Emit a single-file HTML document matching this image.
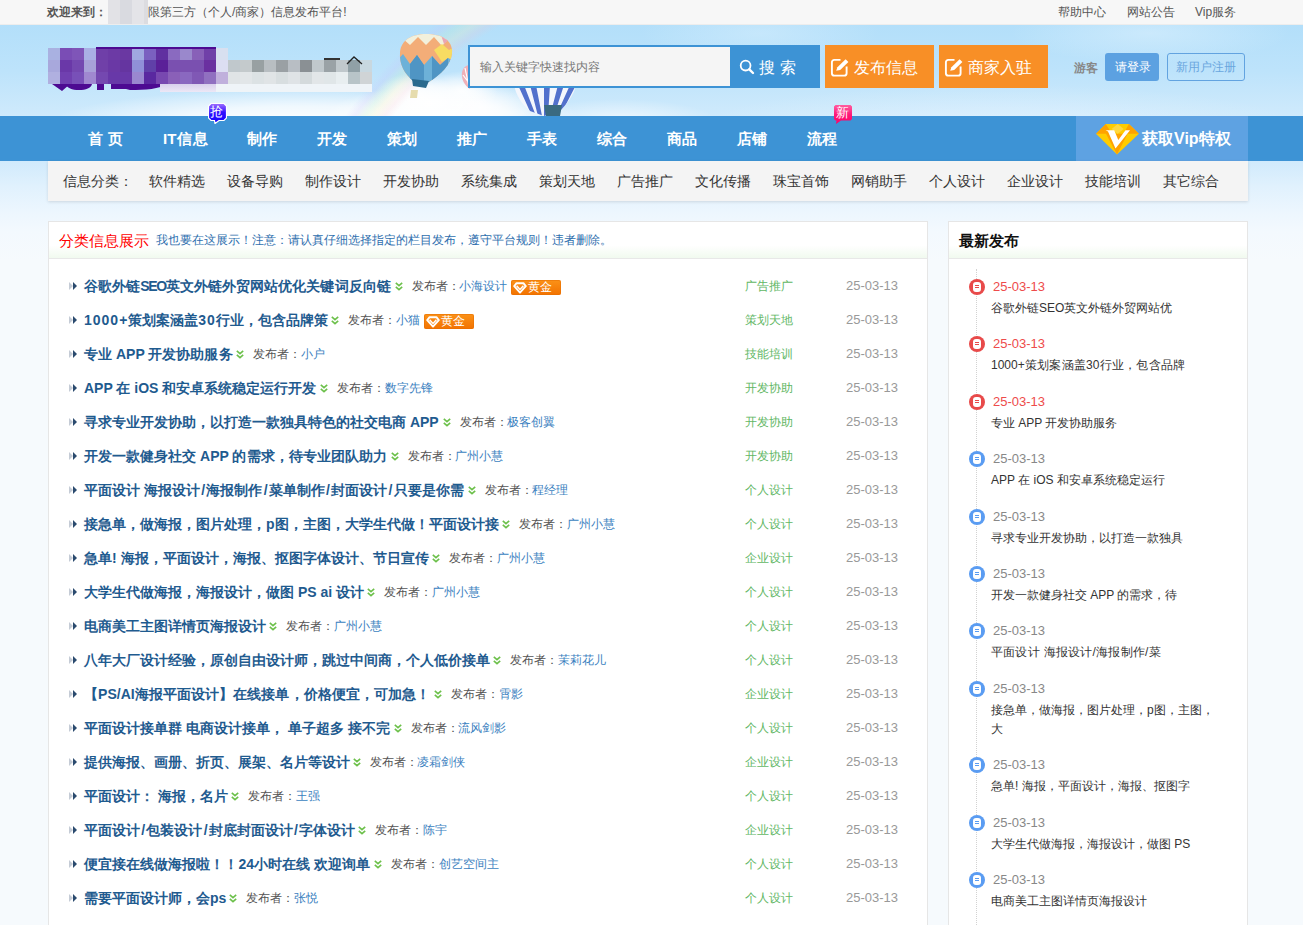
<!DOCTYPE html>
<html><head><meta charset="utf-8">
<style>
*{margin:0;padding:0;box-sizing:border-box}
html,body{width:1303px;height:925px;overflow:hidden}
body{font-family:"Liberation Sans",sans-serif;font-size:12px;color:#333;background:#f6fafd;position:relative}
.abs{position:absolute}
.j{text-align:justify;text-align-last:justify;white-space:nowrap}
#topbar{left:0;top:0;width:1303px;height:25px;background:#f7f7f7;border-bottom:1px solid #ededed}
#topbar span{position:absolute;top:5px;line-height:14px;font-size:12px;color:#555;white-space:nowrap}
#header{left:0;top:25px;width:1303px;height:91px;overflow:hidden;
 background:linear-gradient(180deg,#b3dffa 0%,#bde3fb 50%,#cfeafc 100%)}
#nav{left:0;top:116px;width:1303px;height:45px;background:#3d93d5}
#nav .it{position:absolute;top:0;height:45px;line-height:45px;color:#fff;font-size:15px;font-weight:bold;white-space:nowrap}
#vip{left:1076px;top:116px;width:172px;height:45px;background:#5ea2e2}
#vip b{position:absolute;left:66px;top:0;width:86px;line-height:45px;font-size:16px;color:#fff;text-align:justify;text-align-last:justify;white-space:nowrap}
.mb{position:absolute;width:12px;height:12px}
.btn-o{top:20px;width:109px;height:43px;background:#f88f26}
.btn-o span{position:absolute;left:29px;top:1px;line-height:43px;font-size:16px;color:#fff;white-space:nowrap}
#pagebg{left:0;top:161px;width:1303px;height:764px;background:linear-gradient(180deg,#d0eafc 0px,#e0f1fd 25px,#ecf6fe 50px,#f3f9fe 70px,#f6fafd 100px,#f6fafd 100%)}
#subbar{left:48px;top:161px;width:1200px;height:40px;background:#f4f4f4;box-shadow:0 1px 3px rgba(0,0,0,.12)}
#subbar span{position:absolute;top:0;line-height:40px;font-size:14px;color:#333;white-space:nowrap}
.panel{background:#fff;border:1px solid #e6e6e6}
.phead{position:absolute;left:0;top:0;right:0;height:37px;background:linear-gradient(180deg,#fff 0%,#fff 65%,#f1faef 100%);border-bottom:1px solid #e8e8e8}
.row{position:absolute;left:0;width:878px;height:34px;line-height:34px;white-space:nowrap}
.row .arr{position:absolute;left:20px;top:13px}
.tt{position:absolute;left:35px;top:0;text-align:justify;text-align-last:justify;font-size:14px;font-weight:bold;color:#1f5b8f}
.chev{position:absolute;top:13px}
.sl{font-style:normal;padding:0 1.25px}
.pb{position:absolute;top:0;width:43px;font-size:12px;color:#555;text-align:justify;text-align-last:justify}
.pn{position:absolute;top:0;font-size:12px;color:#3b7fc0;text-align:justify;text-align-last:justify}
.gold{position:absolute;top:11px;width:50px;height:15px;border-radius:2px;background:linear-gradient(180deg,#fb9218,#f27200);box-shadow:inset 0 0 0 1px rgba(230,110,0,.5)}
.gold b{position:absolute;left:17px;top:0;width:23px;text-align:justify;text-align-last:justify;white-space:nowrap;line-height:15px;font-weight:normal;color:#fff;font-size:12px}
.cat{position:absolute;left:696px;top:0;width:47.5px;font-size:12px;color:#62b765;text-align:justify;text-align-last:justify}
.dt{position:absolute;left:797px;top:0;font-size:13px;color:#999}
.si{position:absolute;left:0;width:298px}
.si .ic{position:absolute;left:20px;top:1.5px;width:16px;height:16px;border-radius:50%;background:#5a9cf2}
.si.red .ic{background:#e84a4a}
.si .ic i{position:absolute;left:4px;top:3px;width:8px;height:10px;border-radius:3px;background:#fff}
.si .ic i:before,.si .ic i:after{content:"";position:absolute;left:2px;width:4px;height:1px;background:#5a9cf2}
.si.red .ic i:before,.si.red .ic i:after{background:#e84a4a}
.si .ic i:before{top:3px;height:1.3px}.si .ic i:after{top:5.2px;height:1.3px}
.sd{position:absolute;left:44px;top:0;line-height:20px;font-size:13px;color:#888}
.si.red .sd{color:#ee4b4b}
.st{position:absolute;left:42px;top:22px;white-space:nowrap;text-align:justify;text-align-last:justify;line-height:19px;font-size:12px;color:#333}
#tl{position:absolute;left:27px;top:47px;width:0;height:680px;border-left:1px dotted #d2d2d2}
</style></head><body>
<div id="topbar" class="abs">
 <span class="j" style="left:47px;width:52px;font-weight:bold">欢迎来到：</span>
 <div class="abs" style="left:108px;top:0;width:40px;height:24px;background:linear-gradient(90deg,#e2e2e6 0 12px,#d9dae0 12px 24px,#e4e4e8 24px 36px,#dcdce0 36px)"></div>
 <span class="j" style="left:148px;width:197px">限第三方（个人/商家）信息发布平台!</span>
 <span class="j" style="left:1058px;width:47.5px">帮助中心</span>
 <span class="j" style="left:1127px;width:47.5px">网站公告</span>
 <span class="j" style="left:1195px;width:41.5px">Vip服务</span>
</div>
<div id="header" class="abs">
 <div class="abs" style="left:0;top:0;width:1303px;height:91px;background:
 radial-gradient(ellipse 60px 30px at 430px 78px,rgba(255,255,255,.95),rgba(255,255,255,.5) 55%,rgba(255,255,255,0)),
 radial-gradient(ellipse 40px 22px at 415px 70px,rgba(255,255,255,.95),rgba(255,255,255,.6) 55%,rgba(255,255,255,0)),
 radial-gradient(ellipse 36px 20px at 462px 66px,rgba(255,255,255,.9),rgba(255,255,255,.5) 55%,rgba(255,255,255,0)),
 radial-gradient(ellipse 50px 26px at 480px 82px,rgba(255,255,255,.9),rgba(255,255,255,.4) 55%,rgba(255,255,255,0)),
 radial-gradient(ellipse 130px 36px at 450px 95px,rgba(255,255,255,1),rgba(255,255,255,.7) 50%,rgba(255,255,255,0)),
 radial-gradient(ellipse 250px 34px at 300px 98px,rgba(255,255,255,.98),rgba(255,255,255,.7) 50%,rgba(255,255,255,0)),
 radial-gradient(ellipse 100px 24px at 620px 98px,rgba(255,255,255,.7),rgba(255,255,255,0)),
 radial-gradient(ellipse 300px 40px at 1000px 100px,rgba(235,246,255,.5),rgba(255,255,255,0)),
 radial-gradient(ellipse 140px 30px at 1150px 8px,rgba(230,245,255,.45),rgba(255,255,255,0)),
 radial-gradient(ellipse 120px 30px at 760px 8px,rgba(230,245,255,.35),rgba(255,255,255,0))"></div>
<div class="abs" style="left:300px;top:0;width:260px;height:91px;background:radial-gradient(circle at 380px 325px,rgba(255,255,255,0) 370px,rgba(255,190,200,.16) 377px,rgba(255,240,170,.2) 385px,rgba(190,240,190,.2) 393px,rgba(200,190,250,.2) 401px,rgba(255,255,255,0) 409px)"></div>
<i class="mb" style="left:48px;top:23px;background:#a9b1e1"></i>
<i class="mb" style="left:60px;top:23px;background:#7a4db5"></i>
<i class="mb" style="left:72px;top:23px;background:#7f55b8"></i>
<i class="mb" style="left:84px;top:23px;background:#aab0e5"></i>
<i class="mb" style="left:96px;top:23px;background:#6f3fa8"></i>
<i class="mb" style="left:108px;top:23px;background:#6c3aa5"></i>
<i class="mb" style="left:120px;top:23px;background:#6a38a2"></i>
<i class="mb" style="left:132px;top:23px;background:#a0a8e0"></i>
<i class="mb" style="left:144px;top:23px;background:#7a60c0"></i>
<i class="mb" style="left:156px;top:23px;background:#6030a0"></i>
<i class="mb" style="left:168px;top:23px;background:#8a6ac0"></i>
<i class="mb" style="left:180px;top:23px;background:#9a88cc"></i>
<i class="mb" style="left:192px;top:23px;background:#8860b8"></i>
<i class="mb" style="left:204px;top:23px;background:#7040a8"></i>
<i class="mb" style="left:216px;top:23px;background:#d8e0f0"></i>
<i class="mb" style="left:48px;top:35px;background:#a8a8dc"></i>
<i class="mb" style="left:60px;top:35px;background:#6a38a8"></i>
<i class="mb" style="left:72px;top:35px;background:#7448b0"></i>
<i class="mb" style="left:84px;top:35px;background:#a8a0d8"></i>
<i class="mb" style="left:96px;top:35px;background:#7040a8"></i>
<i class="mb" style="left:108px;top:35px;background:#6a38a5"></i>
<i class="mb" style="left:120px;top:35px;background:#6535a0"></i>
<i class="mb" style="left:132px;top:35px;background:#9090d8"></i>
<i class="mb" style="left:144px;top:35px;background:#6040a8"></i>
<i class="mb" style="left:156px;top:35px;background:#5a2098"></i>
<i class="mb" style="left:168px;top:35px;background:#7a50b0"></i>
<i class="mb" style="left:180px;top:35px;background:#7a50b0"></i>
<i class="mb" style="left:192px;top:35px;background:#7a50b0"></i>
<i class="mb" style="left:204px;top:35px;background:#6a30a0"></i>
<i class="mb" style="left:216px;top:35px;background:#e0e0f0"></i>
<i class="mb" style="left:48px;top:47px;background:#b0b0e0"></i>
<i class="mb" style="left:60px;top:47px;background:#7040b0"></i>
<i class="mb" style="left:72px;top:47px;background:#7850b8"></i>
<i class="mb" style="left:84px;top:47px;background:#a088d0"></i>
<i class="mb" style="left:96px;top:47px;background:#7448b0"></i>
<i class="mb" style="left:108px;top:47px;background:#6838a8"></i>
<i class="mb" style="left:120px;top:47px;background:#6838a8"></i>
<i class="mb" style="left:132px;top:47px;background:#9a88d0"></i>
<i class="mb" style="left:144px;top:47px;background:#5a28a0"></i>
<i class="mb" style="left:156px;top:47px;background:#7848b0"></i>
<i class="mb" style="left:168px;top:47px;background:#8a60b8"></i>
<i class="mb" style="left:180px;top:47px;background:#8a68c0"></i>
<i class="mb" style="left:192px;top:47px;background:#8058b5"></i>
<i class="mb" style="left:204px;top:47px;background:#9070c0"></i>
<i class="mb" style="left:216px;top:47px;background:#c8b8e0"></i>
<svg class="abs" style="left:50px;top:59px" width="120" height="8" viewBox="0 0 120 8"><path d="M2 0H20L12 7Z M16 0H42C41 4 36 6 29 6C22 6 17 4 16 0Z M47 0H54V6H47Z M61 0H76V5H61Z M76 0H117C110 5 95 6 80 6L76 5Z" fill="#4d0a92"/></svg>

<i class="abs" style="left:160px;top:59px;width:68px;height:8px;background:linear-gradient(180deg,#d8d0ec,#ece8f6)"></i>
<i class="abs" style="left:96px;top:22px;width:120px;height:2px;background:#4d0a92"></i>
<i class="mb" style="left:228px;top:35px;background:#c0c8cc"></i>
<i class="mb" style="left:240px;top:35px;background:#c4cacc"></i>
<i class="mb" style="left:252px;top:35px;background:#98a0a2"></i>
<i class="mb" style="left:264px;top:35px;background:#b8bec2"></i>
<i class="mb" style="left:276px;top:35px;background:#9aa0a4"></i>
<i class="mb" style="left:288px;top:35px;background:#b8bec4"></i>
<i class="mb" style="left:300px;top:35px;background:#8a9094"></i>
<i class="mb" style="left:312px;top:35px;background:#c0c8cc"></i>
<i class="mb" style="left:324px;top:35px;background:#9aa2a6"></i>
<i class="mb" style="left:336px;top:35px;background:#c0c8cc"></i>
<i class="mb" style="left:348px;top:35px;background:#90a0a6"></i>
<i class="mb" style="left:360px;top:35px;background:#c8d8e0"></i>
<i class="mb" style="left:228px;top:47px;background:#e0e4e6"></i>
<i class="mb" style="left:240px;top:47px;background:#e2e6e8"></i>
<i class="mb" style="left:252px;top:47px;background:#dce2e4"></i>
<i class="mb" style="left:264px;top:47px;background:#e0e4e6"></i>
<i class="mb" style="left:276px;top:47px;background:#d8dee0"></i>
<i class="mb" style="left:288px;top:47px;background:#dfe3e6"></i>
<i class="mb" style="left:300px;top:47px;background:#d4dadc"></i>
<i class="mb" style="left:312px;top:47px;background:#e2e6e8"></i>
<i class="mb" style="left:324px;top:47px;background:#e0e6e8"></i>
<i class="mb" style="left:336px;top:47px;background:#e8eef0"></i>
<i class="mb" style="left:348px;top:47px;background:#b8c4c8"></i>
<i class="mb" style="left:360px;top:47px;background:#d0d4d6"></i>
<i class="abs" style="left:216px;top:59px;width:156px;height:8px;background:#eff4f8"></i>
<i class="mb" style="left:216px;top:35px;background:#dcdef2"></i>
<i class="mb" style="left:216px;top:47px;background:#c0b0dc"></i>
<i class="abs" style="left:324px;top:33px;width:16px;height:2px;background:#333"></i>
<svg class="abs" style="left:346px;top:31px" width="18" height="9"><path d="M1 8L8 1L16 8" fill="none" stroke="#222" stroke-width="1.3"/></svg>
<svg class="abs" style="left:396px;top:7px" width="60" height="66" viewBox="0 0 60 66">
 <defs><clipPath id="bc"><path d="M17 49C9 42 3 33 4 20C5 8 16 2 30 2C45 2 57 8 56 21C55 33 45 42 33 50Z"/></clipPath></defs>
 <g clip-path="url(#bc)">
  <rect width="60" height="66" fill="#f3ad78"/>
  <path d="M0 0H60V12L53 6L46 14L38 5L30 13L22 5L14 13L6 6L0 12Z" fill="#f2f0dc"/>
  <path d="M44 0H60V14L54 7L48 12Z" fill="#eaa6b4"/>
  <path d="M38 18L46 12L53 18L60 14V30L52 26L46 30Z" fill="#f7dc62"/>
  <path d="M0 30L7 22L14 32L21 23L28 33L36 24L44 33L52 26L60 30V66H0Z" fill="#6db1d8"/>
  <path d="M14 32L21 23L28 33V66H14Z M36 24L44 33L52 26V66H36Z" fill="#4f95c4"/>
 </g>
 <path d="M16 47L33 49L30 56L17 54Z" fill="#2b6a8e"/>
 <path d="M15 58H22L21 66H14Z" fill="#e6dcae"/>
</svg>
<svg class="abs" style="left:460px;top:38px" width="12" height="32"><path d="M10 2C4 2 1 8 2 14C3 20 7 24 10 26Z" fill="#f0b0b8"/><path d="M5 5L9 24M3 12L9 20" stroke="#fff" stroke-width="1.2"/></svg>
<svg class="abs" style="left:514px;top:60px" width="62" height="31" viewBox="0 0 62 31">
 <defs><clipPath id="sc"><path d="M0 0H62C60 10 52 20 46 26L30 31L16 26C8 20 2 10 0 0Z"/></clipPath></defs>
 <g clip-path="url(#sc)">
  <rect width="62" height="31" fill="#f4f6fc"/>
  <path d="M4 0L10 0L22 31H18Z M16 0H22L28 31H24Z M30 0H36L34 31H30Z M44 0H50L40 31H36Z M56 0H62L46 31H42Z" fill="#5270cc"/>
 </g>
 <path d="M30 20L48 20L46 31H32Z" fill="#3a6a80"/>
</svg>
<div class="abs" style="left:468px;top:20px;width:262px;height:43px;border:2px solid #3d93d5;border-right:0;background:#f5f5f5">
 <span class="abs j" style="left:10px;top:1px;width:119px;line-height:39px;font-size:12px;color:#777">输入关键字快速找内容</span>
</div>
<div class="abs" style="left:730px;top:20px;width:90px;height:43px;background:#3d93d5">
 <svg class="abs" style="left:9px;top:14px" width="16" height="16" viewBox="0 0 16 16"><circle cx="6.6" cy="6.6" r="4.9" fill="none" stroke="#fff" stroke-width="1.8"/><path d="M10.3 10.3L14 14" stroke="#fff" stroke-width="2.4" stroke-linecap="round"/></svg>
 <span class="abs j" style="left:29px;top:1px;width:37px;line-height:43px;font-size:16px;color:#fff">搜 索</span>
</div>
<div class="abs btn-o" style="left:825px">
 <svg class="abs" style="left:5px;top:13px" width="20" height="19" viewBox="0 0 20 19"><path d="M10.5 1.9H4.3C2.9 1.9 1.9 2.9 1.9 4.3V15.2C1.9 16.6 2.9 17.6 4.3 17.6H14.2C15.6 17.6 16.6 16.6 16.6 15.2V8.5" fill="none" stroke="#fff" stroke-width="1.9"/><path d="M6.2 12.8L7.4 9.3L15.6 1.2L18.4 3.9L10.2 12Z" fill="#fff"/></svg>
 <span class="j" style="width:64px">发布信息</span>
</div>
<div class="abs btn-o" style="left:939px">
 <svg class="abs" style="left:5px;top:13px" width="20" height="19" viewBox="0 0 20 19"><path d="M10.5 1.9H4.3C2.9 1.9 1.9 2.9 1.9 4.3V15.2C1.9 16.6 2.9 17.6 4.3 17.6H14.2C15.6 17.6 16.6 16.6 16.6 15.2V8.5" fill="none" stroke="#fff" stroke-width="1.9"/><path d="M6.2 12.8L7.4 9.3L15.6 1.2L18.4 3.9L10.2 12Z" fill="#fff"/></svg>
 <span class="j" style="width:64px">商家入驻</span>
</div>
<span class="abs j" style="left:1074px;top:31px;width:23.6px;line-height:24px;font-size:12px;color:#888;font-weight:bold">游客</span>
<div class="abs" style="left:1105px;top:28px;width:54px;height:28px;border-radius:3px;background:#5ca1e1;color:#fff;font-size:12px;line-height:29px"><span class="abs j" style="left:9.5px;top:0;width:36px">请登录</span></div>
<div class="abs" style="left:1167px;top:28px;width:78px;height:28px;border-radius:3px;border:1px solid #62a3e0;color:#6aa6de;font-size:12px;line-height:27px"><span class="abs j" style="left:8px;top:0;width:59px">新用户注册</span></div>


</div>
<div id="pagebg" class="abs"></div>
<div id="nav" class="abs">
 <span class="it j" style="left:88px;width:35px">首 页</span>
 <span class="it j" style="left:163px;width:45px">IT信息</span>
 <span class="it j" style="left:247px;width:30px">制作</span>
 <span class="it j" style="left:317px;width:30px">开发</span>
 <span class="it j" style="left:387px;width:30px">策划</span>
 <span class="it j" style="left:457px;width:30px">推广</span>
 <span class="it j" style="left:527px;width:30px">手表</span>
 <span class="it j" style="left:597px;width:30px">综合</span>
 <span class="it j" style="left:667px;width:30px">商品</span>
 <span class="it j" style="left:737px;width:30px">店铺</span>
 <span class="it j" style="left:807px;width:30px">流程</span>
</div>
<div id="vip" class="abs">
 <svg class="abs" style="left:20px;top:8px" width="43" height="31" viewBox="0 0 43 31"><path d="M9.8 0H32.9L42.9 9.8L21 30.6L0 9.8Z" fill="#ffcc00"/><path d="M9.8 0L0 9.8H16Z M32.9 0L42.9 9.8H27.5Z M10 9.8H31.6L21 30.6Z" fill="#ffa200"/><path d="M21.7 0L27.7 5L21.7 9.8L15.6 5Z" fill="#ffd840"/><path d="M9.6 6.2H18.2L22.3 15.9L29.5 6.2H34L19.5 24.5L12 7.6Z" fill="#fff"/></svg>
 <b>获取Vip特权</b>
</div>
<div class="abs" style="left:208px;top:103px;width:19px;height:21px">
 <svg width="19" height="21" viewBox="0 0 19 21"><defs><linearGradient id="bg1" x1="0" y1="0" x2="0" y2="1"><stop offset="0" stop-color="#a070ff"/><stop offset=".45" stop-color="#3010ff"/><stop offset="1" stop-color="#1400ff"/></linearGradient></defs>
 <path d="M3 0.5H16L18.5 3V15L16 17.5H11L7 20.5L6.5 17.5H3L0.5 15V3Z" fill="url(#bg1)" stroke="#fff" stroke-width="1.2"/></svg>
 <span class="abs" style="left:2px;top:1px;font-size:13px;line-height:15px;color:#fff">抢</span>
</div>
<div class="abs" style="left:834px;top:105px;width:18px;height:19px">
 <svg width="18" height="19" viewBox="0 0 18 19"><defs><linearGradient id="bg2" x1="0" y1="0" x2="0" y2="1"><stop offset="0" stop-color="#ff5da0"/><stop offset=".5" stop-color="#ff1a78"/><stop offset="1" stop-color="#ff0066"/></linearGradient></defs>
 <path d="M1.5 0H16.5L18 1.5V14L16.5 15.5H7L2 19L2.5 15.5H1.5L0 14V1.5Z" fill="url(#bg2)"/></svg>
 <span class="abs" style="left:2px;top:0px;font-size:13px;line-height:15px;color:#fff">新</span>
</div>

<div id="subbar" class="abs">
 <span class="j" style="left:15px;width:61px">信息分类：</span>
 <span class="j" style="left:101px;width:55.5px">软件精选</span>
 <span class="j" style="left:179px;width:55.5px">设备导购</span>
 <span class="j" style="left:257px;width:55.5px">制作设计</span>
 <span class="j" style="left:335px;width:55.5px">开发协助</span>
 <span class="j" style="left:413px;width:55.5px">系统集成</span>
 <span class="j" style="left:491px;width:55.5px">策划天地</span>
 <span class="j" style="left:569px;width:55.5px">广告推广</span>
 <span class="j" style="left:647px;width:55.5px">文化传播</span>
 <span class="j" style="left:725px;width:55.5px">珠宝首饰</span>
 <span class="j" style="left:803px;width:55.5px">网销助手</span>
 <span class="j" style="left:881px;width:55.5px">个人设计</span>
 <span class="j" style="left:959px;width:55.5px">企业设计</span>
 <span class="j" style="left:1037px;width:55.5px">技能培训</span>
 <span class="j" style="left:1115px;width:55.5px">其它综合</span>
</div>
<div id="main" class="abs panel" style="left:48px;top:221px;width:880px;height:720px">
 <div class="phead">
  <span class="abs j" style="left:10px;top:0;width:89.5px;line-height:37px;font-size:15px;color:#f00">分类信息展示</span>
  <span class="abs j" style="left:107px;top:0;width:450px;line-height:37px;font-size:12px;color:#2f6fae">我也要在这展示！注意：请认真仔细选择指定的栏目发布，遵守平台规则！违者删除。</span>
 </div>
 <div class="row" style="top:47px"><svg class="arr" width="10" height="8" viewBox="0 0 10 8"><path d="M0 0L4 4L0 8Z" fill="#c5ccd6"/><path d="M4 0L8 4L4 8Z" fill="#2a4a6e"/></svg><span class="tt" style="width:306.7px">谷歌外链<span style='letter-spacing:-1.3px'>SEO</span>英文外链外贸网站优化关键词反向链</span><svg class="chev" style="left:345.5px" width="8" height="9" viewBox="0 0 8 9"><path d="M0.8 0.8L4 3.6L7.2 0.8M0.8 4.8L4 7.6L7.2 4.8" fill="none" stroke="#6cc04a" stroke-width="1.6"/></svg><span class="pb" style="left:362.5px">发布者：</span><span class="pn" style="left:410.0px;width:47.5px">小海设计</span><span class="gold" style="left:462.4px"><svg width="14" height="12" viewBox="0 0 14 12" style="position:absolute;left:2px;top:1.5px"><path d="M3.6 1.2H10.4L12.8 4.2L7 10.6L1.2 4.2Z" fill="none" stroke="#fff" stroke-width="1.9" stroke-linejoin="round"/><path d="M3.6 3.8L7 7.4L10.4 3.8" fill="none" stroke="#fff" stroke-width="1.5"/></svg><b>黄金</b></span><span class="cat">广告推广</span><span class="dt">25-03-13</span></div>
<div class="row" style="top:81px"><svg class="arr" width="10" height="8" viewBox="0 0 10 8"><path d="M0 0L4 4L0 8Z" fill="#c5ccd6"/><path d="M4 0L8 4L4 8Z" fill="#2a4a6e"/></svg><span class="tt" style="width:243.3px"><span style='letter-spacing:1px'>1000+</span>策划案涵盖<span style='letter-spacing:1px'>30</span>行业，包含品牌策</span><svg class="chev" style="left:282.1px" width="8" height="9" viewBox="0 0 8 9"><path d="M0.8 0.8L4 3.6L7.2 0.8M0.8 4.8L4 7.6L7.2 4.8" fill="none" stroke="#6cc04a" stroke-width="1.6"/></svg><span class="pb" style="left:299.1px">发布者：</span><span class="pn" style="left:346.6px;width:23.5px">小猫</span><span class="gold" style="left:375.0px"><svg width="14" height="12" viewBox="0 0 14 12" style="position:absolute;left:2px;top:1.5px"><path d="M3.6 1.2H10.4L12.8 4.2L7 10.6L1.2 4.2Z" fill="none" stroke="#fff" stroke-width="1.9" stroke-linejoin="round"/><path d="M3.6 3.8L7 7.4L10.4 3.8" fill="none" stroke="#fff" stroke-width="1.5"/></svg><b>黄金</b></span><span class="cat">策划天地</span><span class="dt">25-03-13</span></div>
<div class="row" style="top:115px"><svg class="arr" width="10" height="8" viewBox="0 0 10 8"><path d="M0 0L4 4L0 8Z" fill="#c5ccd6"/><path d="M4 0L8 4L4 8Z" fill="#2a4a6e"/></svg><span class="tt" style="width:148.5px">专业 APP 开发协助服务</span><svg class="chev" style="left:187.3px" width="8" height="9" viewBox="0 0 8 9"><path d="M0.8 0.8L4 3.6L7.2 0.8M0.8 4.8L4 7.6L7.2 4.8" fill="none" stroke="#6cc04a" stroke-width="1.6"/></svg><span class="pb" style="left:204.3px">发布者：</span><span class="pn" style="left:251.8px;width:23.5px">小户</span><span class="cat">技能培训</span><span class="dt">25-03-13</span></div>
<div class="row" style="top:149px"><svg class="arr" width="10" height="8" viewBox="0 0 10 8"><path d="M0 0L4 4L0 8Z" fill="#c5ccd6"/><path d="M4 0L8 4L4 8Z" fill="#2a4a6e"/></svg><span class="tt" style="width:232.3px">APP 在 iOS 和安卓系统稳定运行开发</span><svg class="chev" style="left:271.1px" width="8" height="9" viewBox="0 0 8 9"><path d="M0.8 0.8L4 3.6L7.2 0.8M0.8 4.8L4 7.6L7.2 4.8" fill="none" stroke="#6cc04a" stroke-width="1.6"/></svg><span class="pb" style="left:288.1px">发布者：</span><span class="pn" style="left:335.6px;width:47.5px">数字先锋</span><span class="cat">开发协助</span><span class="dt">25-03-13</span></div>
<div class="row" style="top:183px"><svg class="arr" width="10" height="8" viewBox="0 0 10 8"><path d="M0 0L4 4L0 8Z" fill="#c5ccd6"/><path d="M4 0L8 4L4 8Z" fill="#2a4a6e"/></svg><span class="tt" style="width:354.7px">寻求专业开发协助，以打造一款独具特色的社交电商 APP</span><svg class="chev" style="left:393.5px" width="8" height="9" viewBox="0 0 8 9"><path d="M0.8 0.8L4 3.6L7.2 0.8M0.8 4.8L4 7.6L7.2 4.8" fill="none" stroke="#6cc04a" stroke-width="1.6"/></svg><span class="pb" style="left:410.5px">发布者：</span><span class="pn" style="left:458.0px;width:47.5px">极客创翼</span><span class="cat">开发协助</span><span class="dt">25-03-13</span></div>
<div class="row" style="top:217px"><svg class="arr" width="10" height="8" viewBox="0 0 10 8"><path d="M0 0L4 4L0 8Z" fill="#c5ccd6"/><path d="M4 0L8 4L4 8Z" fill="#2a4a6e"/></svg><span class="tt" style="width:302.7px">开发一款健身社交 APP 的需求，待专业团队助力</span><svg class="chev" style="left:341.5px" width="8" height="9" viewBox="0 0 8 9"><path d="M0.8 0.8L4 3.6L7.2 0.8M0.8 4.8L4 7.6L7.2 4.8" fill="none" stroke="#6cc04a" stroke-width="1.6"/></svg><span class="pb" style="left:358.5px">发布者：</span><span class="pn" style="left:406.0px;width:47.5px">广州小慧</span><span class="cat">开发协助</span><span class="dt">25-03-13</span></div>
<div class="row" style="top:251px"><svg class="arr" width="10" height="8" viewBox="0 0 10 8"><path d="M0 0L4 4L0 8Z" fill="#c5ccd6"/><path d="M4 0L8 4L4 8Z" fill="#2a4a6e"/></svg><span class="tt" style="width:379.7px">平面设计 海报设计<i class='sl'>/</i>海报制作<i class='sl'>/</i>菜单制作<i class='sl'>/</i>封面设计<i class='sl'>/</i>只要是你需</span><svg class="chev" style="left:418.5px" width="8" height="9" viewBox="0 0 8 9"><path d="M0.8 0.8L4 3.6L7.2 0.8M0.8 4.8L4 7.6L7.2 4.8" fill="none" stroke="#6cc04a" stroke-width="1.6"/></svg><span class="pb" style="left:435.5px">发布者：</span><span class="pn" style="left:483.0px;width:35.5px">程经理</span><span class="cat">个人设计</span><span class="dt">25-03-13</span></div>
<div class="row" style="top:285px"><svg class="arr" width="10" height="8" viewBox="0 0 10 8"><path d="M0 0L4 4L0 8Z" fill="#c5ccd6"/><path d="M4 0L8 4L4 8Z" fill="#2a4a6e"/></svg><span class="tt" style="width:414.3px">接急单，做海报，图片处理，p图，主图，大学生代做！平面设计接</span><svg class="chev" style="left:453.1px" width="8" height="9" viewBox="0 0 8 9"><path d="M0.8 0.8L4 3.6L7.2 0.8M0.8 4.8L4 7.6L7.2 4.8" fill="none" stroke="#6cc04a" stroke-width="1.6"/></svg><span class="pb" style="left:470.1px">发布者：</span><span class="pn" style="left:517.6px;width:47.5px">广州小慧</span><span class="cat">个人设计</span><span class="dt">25-03-13</span></div>
<div class="row" style="top:319px"><svg class="arr" width="10" height="8" viewBox="0 0 10 8"><path d="M0 0L4 4L0 8Z" fill="#c5ccd6"/><path d="M4 0L8 4L4 8Z" fill="#2a4a6e"/></svg><span class="tt" style="width:344.6px">急单! 海报，平面设计，海报、抠图字体设计、节日宣传</span><svg class="chev" style="left:383.4px" width="8" height="9" viewBox="0 0 8 9"><path d="M0.8 0.8L4 3.6L7.2 0.8M0.8 4.8L4 7.6L7.2 4.8" fill="none" stroke="#6cc04a" stroke-width="1.6"/></svg><span class="pb" style="left:400.4px">发布者：</span><span class="pn" style="left:447.9px;width:47.5px">广州小慧</span><span class="cat">企业设计</span><span class="dt">25-03-13</span></div>
<div class="row" style="top:353px"><svg class="arr" width="10" height="8" viewBox="0 0 10 8"><path d="M0 0L4 4L0 8Z" fill="#c5ccd6"/><path d="M4 0L8 4L4 8Z" fill="#2a4a6e"/></svg><span class="tt" style="width:279.5px">大学生代做海报，海报设计，做图 PS ai 设计</span><svg class="chev" style="left:318.3px" width="8" height="9" viewBox="0 0 8 9"><path d="M0.8 0.8L4 3.6L7.2 0.8M0.8 4.8L4 7.6L7.2 4.8" fill="none" stroke="#6cc04a" stroke-width="1.6"/></svg><span class="pb" style="left:335.3px">发布者：</span><span class="pn" style="left:382.8px;width:47.5px">广州小慧</span><span class="cat">个人设计</span><span class="dt">25-03-13</span></div>
<div class="row" style="top:387px"><svg class="arr" width="10" height="8" viewBox="0 0 10 8"><path d="M0 0L4 4L0 8Z" fill="#c5ccd6"/><path d="M4 0L8 4L4 8Z" fill="#2a4a6e"/></svg><span class="tt" style="width:181.3px">电商美工主图详情页海报设计</span><svg class="chev" style="left:220.1px" width="8" height="9" viewBox="0 0 8 9"><path d="M0.8 0.8L4 3.6L7.2 0.8M0.8 4.8L4 7.6L7.2 4.8" fill="none" stroke="#6cc04a" stroke-width="1.6"/></svg><span class="pb" style="left:237.1px">发布者：</span><span class="pn" style="left:284.6px;width:47.5px">广州小慧</span><span class="cat">个人设计</span><span class="dt">25-03-13</span></div>
<div class="row" style="top:421px"><svg class="arr" width="10" height="8" viewBox="0 0 10 8"><path d="M0 0L4 4L0 8Z" fill="#c5ccd6"/><path d="M4 0L8 4L4 8Z" fill="#2a4a6e"/></svg><span class="tt" style="width:405.3px">八年大厂设计经验，原创自由设计师，跳过中间商，个人低价接单</span><svg class="chev" style="left:444.1px" width="8" height="9" viewBox="0 0 8 9"><path d="M0.8 0.8L4 3.6L7.2 0.8M0.8 4.8L4 7.6L7.2 4.8" fill="none" stroke="#6cc04a" stroke-width="1.6"/></svg><span class="pb" style="left:461.1px">发布者：</span><span class="pn" style="left:508.6px;width:47.5px">茉莉花儿</span><span class="cat">个人设计</span><span class="dt">25-03-13</span></div>
<div class="row" style="top:455px"><svg class="arr" width="10" height="8" viewBox="0 0 10 8"><path d="M0 0L4 4L0 8Z" fill="#c5ccd6"/><path d="M4 0L8 4L4 8Z" fill="#2a4a6e"/></svg><span class="tt" style="width:346.2px">【PS/AI海报平面设计】在线接单，价格便宜，可加急！</span><svg class="chev" style="left:385.0px" width="8" height="9" viewBox="0 0 8 9"><path d="M0.8 0.8L4 3.6L7.2 0.8M0.8 4.8L4 7.6L7.2 4.8" fill="none" stroke="#6cc04a" stroke-width="1.6"/></svg><span class="pb" style="left:402.0px">发布者：</span><span class="pn" style="left:449.5px;width:23.5px">霄影</span><span class="cat">企业设计</span><span class="dt">25-03-13</span></div>
<div class="row" style="top:489px"><svg class="arr" width="10" height="8" viewBox="0 0 10 8"><path d="M0 0L4 4L0 8Z" fill="#c5ccd6"/><path d="M4 0L8 4L4 8Z" fill="#2a4a6e"/></svg><span class="tt" style="width:305.7px">平面设计接单群 电商设计接单， 单子超多 接不完</span><svg class="chev" style="left:344.5px" width="8" height="9" viewBox="0 0 8 9"><path d="M0.8 0.8L4 3.6L7.2 0.8M0.8 4.8L4 7.6L7.2 4.8" fill="none" stroke="#6cc04a" stroke-width="1.6"/></svg><span class="pb" style="left:361.5px">发布者：</span><span class="pn" style="left:409.0px;width:47.5px">流风剑影</span><span class="cat">个人设计</span><span class="dt">25-03-13</span></div>
<div class="row" style="top:523px"><svg class="arr" width="10" height="8" viewBox="0 0 10 8"><path d="M0 0L4 4L0 8Z" fill="#c5ccd6"/><path d="M4 0L8 4L4 8Z" fill="#2a4a6e"/></svg><span class="tt" style="width:264.7px">提供海报、画册、折页、展架、名片等设计</span><svg class="chev" style="left:303.5px" width="8" height="9" viewBox="0 0 8 9"><path d="M0.8 0.8L4 3.6L7.2 0.8M0.8 4.8L4 7.6L7.2 4.8" fill="none" stroke="#6cc04a" stroke-width="1.6"/></svg><span class="pb" style="left:320.5px">发布者：</span><span class="pn" style="left:368.0px;width:47.5px">凌霜剑侠</span><span class="cat">企业设计</span><span class="dt">25-03-13</span></div>
<div class="row" style="top:557px"><svg class="arr" width="10" height="8" viewBox="0 0 10 8"><path d="M0 0L4 4L0 8Z" fill="#c5ccd6"/><path d="M4 0L8 4L4 8Z" fill="#2a4a6e"/></svg><span class="tt" style="width:143.3px">平面设计： 海报，名片</span><svg class="chev" style="left:182.1px" width="8" height="9" viewBox="0 0 8 9"><path d="M0.8 0.8L4 3.6L7.2 0.8M0.8 4.8L4 7.6L7.2 4.8" fill="none" stroke="#6cc04a" stroke-width="1.6"/></svg><span class="pb" style="left:199.1px">发布者：</span><span class="pn" style="left:246.6px;width:23.5px">王强</span><span class="cat">个人设计</span><span class="dt">25-03-13</span></div>
<div class="row" style="top:591px"><svg class="arr" width="10" height="8" viewBox="0 0 10 8"><path d="M0 0L4 4L0 8Z" fill="#c5ccd6"/><path d="M4 0L8 4L4 8Z" fill="#2a4a6e"/></svg><span class="tt" style="width:270.5px">平面设计<i class='sl'>/</i>包装设计<i class='sl'>/</i>封底封面设计<i class='sl'>/</i>字体设计</span><svg class="chev" style="left:309.3px" width="8" height="9" viewBox="0 0 8 9"><path d="M0.8 0.8L4 3.6L7.2 0.8M0.8 4.8L4 7.6L7.2 4.8" fill="none" stroke="#6cc04a" stroke-width="1.6"/></svg><span class="pb" style="left:326.3px">发布者：</span><span class="pn" style="left:373.8px;width:23.5px">陈宇</span><span class="cat">企业设计</span><span class="dt">25-03-13</span></div>
<div class="row" style="top:625px"><svg class="arr" width="10" height="8" viewBox="0 0 10 8"><path d="M0 0L4 4L0 8Z" fill="#c5ccd6"/><path d="M4 0L8 4L4 8Z" fill="#2a4a6e"/></svg><span class="tt" style="width:286.4px">便宜接在线做海报啦！！24小时在线 欢迎询单</span><svg class="chev" style="left:325.2px" width="8" height="9" viewBox="0 0 8 9"><path d="M0.8 0.8L4 3.6L7.2 0.8M0.8 4.8L4 7.6L7.2 4.8" fill="none" stroke="#6cc04a" stroke-width="1.6"/></svg><span class="pb" style="left:342.2px">发布者：</span><span class="pn" style="left:389.7px;width:59.5px">创艺空间主</span><span class="cat">个人设计</span><span class="dt">25-03-13</span></div>
<div class="row" style="top:659px"><svg class="arr" width="10" height="8" viewBox="0 0 10 8"><path d="M0 0L4 4L0 8Z" fill="#c5ccd6"/><path d="M4 0L8 4L4 8Z" fill="#2a4a6e"/></svg><span class="tt" style="width:141.5px">需要平面设计师，会ps</span><svg class="chev" style="left:180.3px" width="8" height="9" viewBox="0 0 8 9"><path d="M0.8 0.8L4 3.6L7.2 0.8M0.8 4.8L4 7.6L7.2 4.8" fill="none" stroke="#6cc04a" stroke-width="1.6"/></svg><span class="pb" style="left:197.3px">发布者：</span><span class="pn" style="left:244.8px;width:23.5px">张悦</span><span class="cat">个人设计</span><span class="dt">25-03-13</span></div>
</div>
<div id="side" class="abs panel" style="left:948px;top:221px;width:300px;height:720px">
 <div class="phead">
  <span class="abs j" style="left:10px;top:0;width:59px;line-height:37px;font-size:15px;font-weight:bold;color:#111">最新发布</span>
 </div>
 <div id="tl"></div>
 <div class="si red" style="top:55px"><i class="ic"><i></i></i><div class="sd">25-03-13</div><div class="st" style="width:178.6px">谷歌外链SEO英文外链外贸网站优</div></div>
<div class="si red" style="top:112px"><i class="ic"><i></i></i><div class="sd">25-03-13</div><div class="st" style="width:194px">1000+策划案涵盖30行业，包含品牌</div></div>
<div class="si red" style="top:170px"><i class="ic"><i></i></i><div class="sd">25-03-13</div><div class="st" style="width:126px">专业 APP 开发协助服务</div></div>
<div class="si blue" style="top:227px"><i class="ic"><i></i></i><div class="sd">25-03-13</div><div class="st" style="width:173.6px">APP 在 iOS 和安卓系统稳定运行</div></div>
<div class="si blue" style="top:285px"><i class="ic"><i></i></i><div class="sd">25-03-13</div><div class="st" style="width:191px">寻求专业开发协助，以打造一款独具</div></div>
<div class="si blue" style="top:342px"><i class="ic"><i></i></i><div class="sd">25-03-13</div><div class="st" style="width:186px">开发一款健身社交 APP 的需求，待</div></div>
<div class="si blue" style="top:399px"><i class="ic"><i></i></i><div class="sd">25-03-13</div><div class="st" style="width:169.7px">平面设计 海报设计/海报制作/菜</div></div>
<div class="si blue" style="top:457px"><i class="ic"><i></i></i><div class="sd">25-03-13</div><div class="st" style="width:215.8px">接急单，做海报，图片处理，p图，主图，</div><div class="st" style="top:41px;width:11px">大</div></div>
<div class="si blue" style="top:533px"><i class="ic"><i></i></i><div class="sd">25-03-13</div><div class="st" style="width:199.5px">急单! 海报，平面设计，海报、抠图字</div></div>
<div class="si blue" style="top:591px"><i class="ic"><i></i></i><div class="sd">25-03-13</div><div class="st" style="width:197.5px">大学生代做海报，海报设计，做图 PS</div></div>
<div class="si blue" style="top:648px"><i class="ic"><i></i></i><div class="sd">25-03-13</div><div class="st" style="width:155px">电商美工主图详情页海报设计</div></div>
</div>
</body></html>
